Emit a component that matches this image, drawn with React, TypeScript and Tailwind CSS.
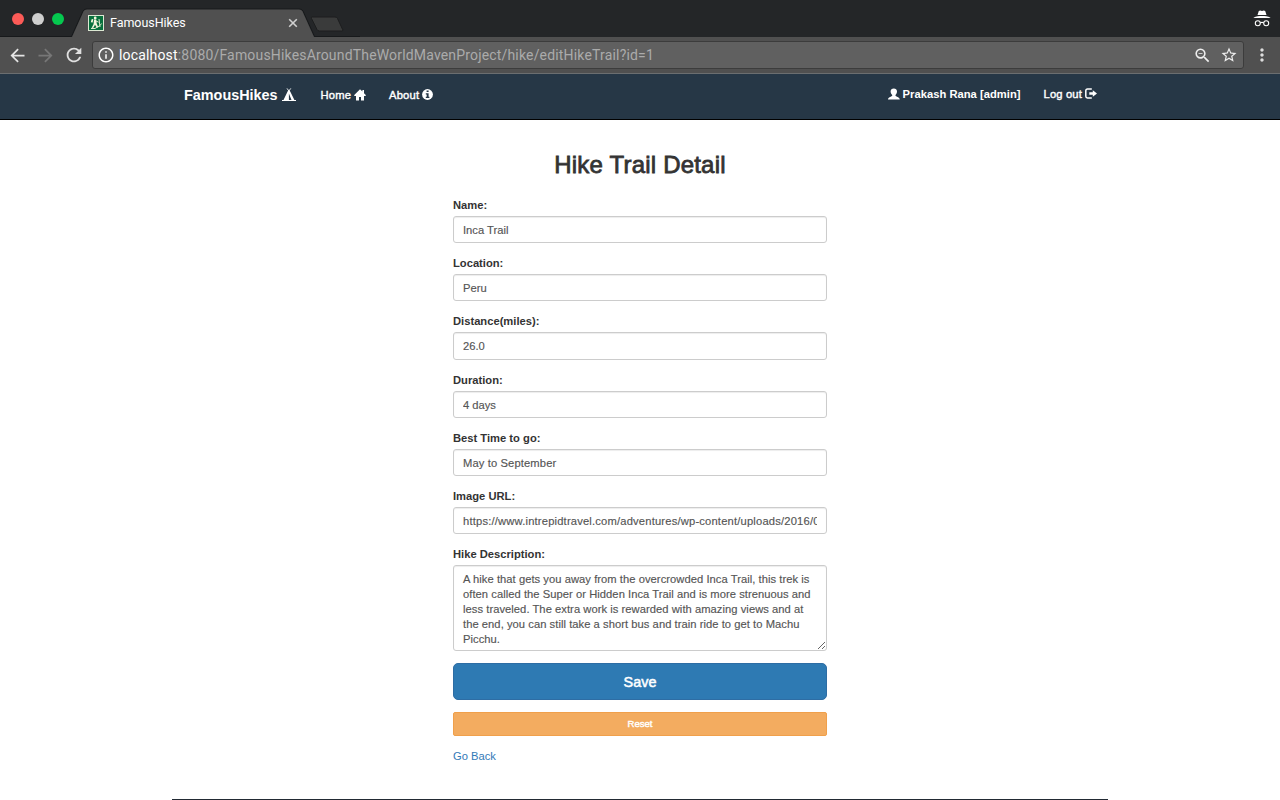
import { MdArrowBack, MdArrowForward, MdRefresh, MdInfoOutline, MdZoomOut, MdStarBorder, MdMoreVert } from 'react-icons/md';

const HikerFavicon = () => (
  <svg width="16" height="16" viewBox="0 0 16 16" className="block">
    <rect width="16" height="16" fill="#dce8d3" />
    <rect x="1" y="1" width="14" height="14" fill="#08713d" />
    <circle cx="7.2" cy="3" r="1.4" fill="#f4f5dc" />
    <path d="M3.6 4.2 5.3 4 4.7 7.6 2.8 7.2Z M6 4.6h2.2l.5 4 1.6 3.6-1.4.5L7 9.7 5.4 12.7 3.6 13l2-4z" fill="#f4f5dc" />
    <path d="M8 6l2.6 1.2M11 4l1 8M3 13.5h4l5-3 1.6-2" stroke="#dfe9cd" strokeWidth="1" fill="none" />
  </svg>
);

const CloseTab = () => (
  <svg width="14" height="14" viewBox="0 0 14 14" className="ml-auto block">
    <path d="M3.200 3.200l7.600 7.600M10.800 3.200l-7.600 7.600" stroke="#d0d0d0" strokeWidth="1.600" />
  </svg>
);

const Incognito = () => (
  <svg width="18" height="18" viewBox="0 0 18 18" className="block" fill="#fff">
    <path d="M5.8 1 7.2.6 9 1.1l1.8-.5 1.4.4 1.3 4H4.5z" />
    <path d="M.6 7.700C3 6.500 6 6.100 9 6.100s6 .4 8.400 1.600v.4H.6z" />
    <g fill="none" stroke="#fff" strokeWidth="1.1">
      <circle cx="4.800" cy="13.200" r="2.500" />
      <circle cx="13.200" cy="13.200" r="2.500" />
      <path d="M7.300 12.800q1.700-.8 3.400 0" />
    </g>
  </svg>
);

const Tent = () => (
  <svg width="14" height="14" viewBox="0 0 14 14" className="block" fill="#fff">
    <path d="M5 .4 6.900 2.900 8.800.4" stroke="#fff" fill="none" strokeWidth=".9" />
    <path fillRule="evenodd" d="M6.200 2.200h1.400L12.400 12H14v1H0v-1h1.500zM6.900 5.500V12h2.600z" />
  </svg>
);

const House = () => (
  <svg width="12" height="12" viewBox="0 0 12 12" className="block" fill="#fff">
    <path d="M6 .2 0 6.300 .6 7H2v4.600h3V8h2v3.600h3V7h1.400l.6-.7L10 4.200V1H8.400v1.600z" />
  </svg>
);

const InfoDisc = () => (
  <svg width="11" height="11" viewBox="0 0 11 11" className="block">
    <circle cx="5.500" cy="5.500" r="5.400" fill="#fff" />
    <path d="M4.600 1.500h2v1.600h-2zM3.800 4.200h2.800v3.600h.8V9H3.800V7.800h.9V5.400h-.9z" fill="#263746" />
  </svg>
);

const User = () => (
  <svg width="12" height="12" viewBox="0 0 12 12" className="block" fill="#fff">
    <path d="M5.800.4C7.700.4 9 1.600 9 3.300c0 1.700-.7 3-1.500 3.700v.8c.2.600 4.300 1.600 4.300 3.600H0C0 9.400 4 8.400 4.200 7.800V7C3.400 6.300 2.600 5 2.600 3.300 2.600 1.600 3.900.4 5.800.4z" />
  </svg>
);

const LogOut = () => (
  <svg width="12" height="11" viewBox="0 0 12 11" className="block">
    <path d="M6.800 1H2.500Q.8 1 .8 2.700v5.600Q.8 10 2.500 10h4.300" fill="none" stroke="#fff" strokeWidth="1.500" />
    <path d="M4.300 4.300H7.800V2.200L12 5.500 7.800 8.800V6.700H4.300z" fill="#fff" />
  </svg>
);

function BrowserChrome() {
  return (
    <header className="font-[Roboto,sans-serif]">
      <div className="relative flex h-[37px] bg-[#242628]">
        <svg className="absolute inset-0" width="360" height="37" viewBox="0 0 360 37">
          <path d="M0 36.500H71.500L83 11Q84 9 86.500 9H299.500Q302 9 303 11L314.500 36.500H360" fill="none" stroke="#17191b" />
          <path d="M72 37 83.500 11.500Q84.500 9.500 87 9.500H299Q301.500 9.500 302.500 11.500L314 37z" fill="#505050" />
          <path d="M311.500 18.500Q310.700 17 312.300 17H335Q337 17 337.500 18.500L342.700 29.700Q343.300 31 341.500 31H319.500Q317.700 31 317 29.500z" fill="#3a3b3b" stroke="#1c1d1e" />
        </svg>
        <div className="relative flex w-full items-center pr-[9px] pt-[1px] pl-3">
          <div className="flex gap-2">
            <i className="size-3 rounded-full bg-[#fc5b57]" />
            <i className="size-3 rounded-full bg-[#cfcfcf]" />
            <i className="size-3 rounded-full bg-[#05c84f]" />
          </div>
          <div className="ml-6 flex w-[212px] items-center pt-[8px]">
            <HikerFavicon />
            <span className="ml-[6px] text-[12.5px] leading-4 tracking-[-0.05px] text-white">FamousHikes</span>
            <CloseTab />
          </div>
          <div className="ml-auto"><Incognito /></div>
        </div>
      </div>
      <div className="flex h-[37px] items-center border-b border-[#6b6e70] bg-[#505050] pr-[8px] pl-[7px]">
        <MdArrowBack size={21} className="text-[#e4e4e4]" />
        <MdArrowForward size={21} className="ml-[7px] text-[#777]" />
        <MdRefresh size={22} className="ml-[7px] text-[#e0e0e0]" />
        <div className="ml-[7px] flex h-7 w-[1152px] items-center rounded-[3px] border border-[#3c3c3c] bg-[#606060] pr-[4px] pl-[4px]">
          <MdInfoOutline size={18} className="text-white" />
          <span className="ml-[4px] text-[14px] leading-5 tracking-[0.17px] text-[#ababab]"><span className="text-white">localhost</span>:8080/FamousHikesAroundTheWorldMavenProject/hike/editHikeTrail?id=1</span>
          <MdZoomOut size={19} className="ml-auto text-[#eee]" />
          <MdStarBorder size={18} className="ml-[8px] mr-[1px] text-[#eee]" />
        </div>
        <MdMoreVert size={20} className="ml-[8px] shrink-0 text-[#ddd]" />
      </div>
    </header>
  );
}

function NavBar() {
  return (
    <nav className="h-[46px] border-b border-black bg-[#263746]">
      <div className="mx-auto flex h-[42px] w-[912px] items-center text-[11.2px] text-white">
        <a className="flex items-center gap-1 text-[14.4px] font-bold"><span className="pt-[2px]">FamousHikes</span><Tent /></a>
        <a className="ml-[25px] flex items-center gap-[3px] tracking-[0.15px] [-webkit-text-stroke:0.4px_#fff]">Home <House /></a>
        <a className="ml-[23px] flex items-center gap-[3px] tracking-[0.2px] [-webkit-text-stroke:0.4px_#fff]">About <InfoDisc /></a>
        <div className="-mr-px ml-auto flex items-center pb-[2px]">
          <a className="mr-[23px] flex items-center gap-[3px] font-bold tracking-[0.03px]"><User />Prakash Rana [admin]</a>
          <a className="flex items-center gap-[3px] tracking-[0.15px] [-webkit-text-stroke:0.4px_#fff]">Log out <LogOut /></a>
        </div>
      </div>
    </nav>
  );
}

const fields = [
  { label: 'Name:', value: 'Inca Trail', size: 'h-[27px]' },
  { label: 'Location:', value: 'Peru', size: 'h-[27px]' },
  { label: 'Distance(miles):', value: '26.0', size: 'h-[28px]' },
  { label: 'Duration:', value: '4 days', size: 'h-[27px]' },
  { label: 'Best Time to go:', value: 'May to September', size: 'h-[27px] tracking-[0.12px]' },
  { label: 'Image URL:', value: 'https://www.intrepidtravel.com/adventures/wp-content/uploads/2016/07/inca-trail.jpg', size: 'h-[27px] tracking-[0.18px]' },
];

const description = 'A hike that gets you away from the overcrowded Inca Trail, this trek is often called the Super or Hidden Inca Trail and is more strenuous and less traveled. The extra work is rewarded with amazing views and at the end, you can still take a short bus and train ride to get to Machu Picchu.';

export default function App() {
  return (
    <div className="h-[800px] overflow-hidden bg-white font-['Liberation_Sans',Arial,sans-serif] text-[11.2px] text-[#333]">
      <BrowserChrome />
      <NavBar />
      <main className="mx-auto flex h-[680px] w-[936px] flex-col items-center border-b border-[#222a33]">
        <form className="flex w-[374px] flex-col pt-[30px]">
          <h1 className="mb-[14px] text-center text-[24px] leading-[30px] tracking-[0.2px] [-webkit-text-stroke:0.8px_#333]">Hike Trail Detail</h1>
          {fields.map((f) => (
            <label key={f.label} className="mb-[9px] block">
              <span className="block h-[22px] pt-[4px] leading-[15px] font-bold">{f.label}</span>
              <input defaultValue={f.value} className={`${f.size} block w-full rounded-[3px] border border-[#ccc] px-[9px] text-[#555] shadow-[inset_0_1px_1px_rgba(0,0,0,0.075)] outline-none [-webkit-text-stroke:0.15px_#555]`} />
            </label>
          ))}
          <label className="block">
            <span className="block h-[22px] pt-[4px] leading-[15px] font-bold">Hike Description:</span>
            <textarea defaultValue={description} className="block h-[86px] w-full resize overflow-hidden rounded-[3px] border border-[#ccc] px-[9px] pt-[6px] leading-[15px] tracking-[0.045px] text-[#555] shadow-[inset_0_1px_1px_rgba(0,0,0,0.075)] outline-none [-webkit-text-stroke:0.15px_#555]" />
          </label>
          <button type="button" className="mt-3 h-[37px] rounded-[5px] border border-[#2e6da4] bg-[#2e7ab3] pt-[2px] text-[14.4px] text-white [-webkit-text-stroke:0.5px_#fff]">Save</button>
          <button type="button" className="mt-3 h-6 rounded-[2px] border border-[#f0a04b] bg-[#f3ac60] text-[9.6px] text-white [-webkit-text-stroke:0.4px_#fff]">Reset</button>
          <a className="mt-[12px] self-start leading-4 text-[#337ab7]">Go Back</a>
        </form>
      </main>
    </div>
  );
}
